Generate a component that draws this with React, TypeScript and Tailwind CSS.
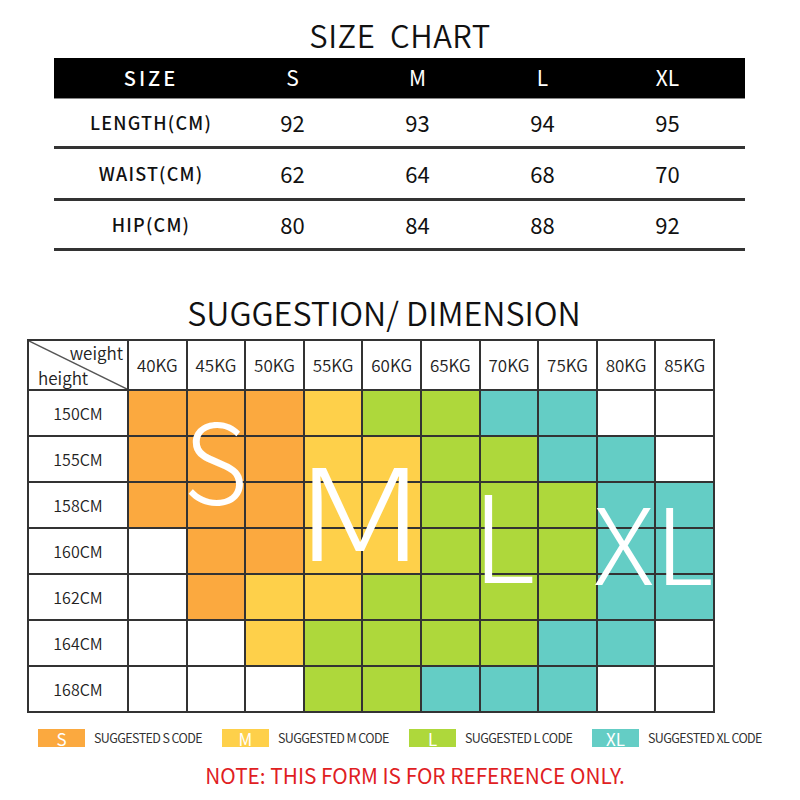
import React from "react";

const O = "bg-[#fba93f]";
const Y = "bg-[#fed04a]";
const G = "bg-[#aed83b]";
const T = "bg-[#64cdc5]";
const W = "bg-white";

const weights = ["40KG", "45KG", "50KG", "55KG", "60KG", "65KG", "70KG", "75KG", "80KG", "85KG"];
const rows: { h: string; c: string[] }[] = [
  { h: "150CM", c: [O, O, O, Y, G, G, T, T, W, W] },
  { h: "155CM", c: [O, O, O, Y, Y, G, G, T, T, W] },
  { h: "158CM", c: [O, O, O, Y, Y, G, G, G, T, T] },
  { h: "160CM", c: [W, O, O, Y, Y, G, G, G, T, T] },
  { h: "162CM", c: [W, O, Y, Y, G, G, G, G, T, T] },
  { h: "164CM", c: [W, W, Y, G, G, G, G, T, T, W] },
  { h: "168CM", c: [W, W, W, G, G, T, T, T, W, W] },
];

const sizeRows = [
  { label: "LENGTH(CM)", v: ["92", "93", "94", "95"], h: "h-[50px]" },
  { label: "WAIST(CM)", v: ["62", "64", "68", "70"], h: "h-[52px]" },
  { label: "HIP(CM)", v: ["80", "84", "88", "92"], h: "h-[50px]" },
];

const FONT = "font-['Noto_Sans_CJK_SC','Noto_Sans',sans-serif]";

export default function App() {
  return (
    <div className={`w-[800px] h-[800px] bg-white text-[#222] ${FONT} relative overflow-hidden`}>
      {/* SIZE CHART title */}
      <div className="h-[58px] flex items-center justify-center pt-[10px]">
        <div className="text-[31px] leading-none tracking-[0.5px] whitespace-pre text-[#111] font-[350]">SIZE  CHART</div>
      </div>

      {/* size table */}
      <div className="ml-[54px] w-[691px]">
        <div className="h-[41px] bg-black border-b border-[#888] grid grid-cols-[176px_125px_125px_125px_125px] items-center text-white">
          <div className="pl-[18px] text-center text-[20px] font-medium tracking-[3px]">SIZE</div>
          <div className="text-center text-[21px]">S</div>
          <div className="text-center text-[21px]">M</div>
          <div className="text-center text-[21px]">L</div>
          <div className="text-center text-[21px]">XL</div>
        </div>
        {sizeRows.map((r) => (
          <div
            key={r.label}
            className={`${r.h} border-b-[3px] border-[#333] grid grid-cols-[176px_125px_125px_125px_125px] items-center`}
          >
            <div className="pl-[18px] text-center text-[18px] font-medium tracking-[1.2px] text-[#111]">{r.label}</div>
            {r.v.map((v, i) => (
              <div key={i} className="text-center text-[22px] text-[#111]">
                {v}
              </div>
            ))}
          </div>
        ))}
      </div>

      {/* SUGGESTION / DIMENSION title */}
      <div className="h-[88px] flex items-center justify-center pt-[34px] pr-[32px]">
        <div className="text-[32.3px] leading-none text-[#111] font-[350] whitespace-pre">SUGGESTION/ DIMENSION</div>
      </div>

      {/* grid */}
      <div className="relative ml-[27px] w-[688px]">
        <div className="border-l-2 border-t-2 border-[#333] grid grid-cols-[100px_repeat(10,1fr)] font-[350]">
          <div className="h-[50px] border-r-2 border-b-2 border-[#333] relative">
            <svg className="absolute inset-0" width="100%" height="100%" viewBox="0 0 98 48" preserveAspectRatio="none">
              <line x1="0" y1="0" x2="98" y2="48" stroke="#555" strokeWidth="1.5" />
            </svg>
            <span className="absolute right-[4px] top-[3px] text-[17px] leading-none">weight</span>
            <span className="absolute left-[9px] bottom-[3px] text-[17px] leading-none">height</span>
          </div>
          {weights.map((w) => (
            <div key={w} className="h-[50px] border-r-2 border-b-2 border-[#333] flex items-center justify-center text-[17px]">
              {w}
            </div>
          ))}
          {rows.map((r) => (
            <React.Fragment key={r.h}>
              <div className="h-[46px] border-r-2 border-b-2 border-[#333] flex items-center justify-center text-[16px]">
                {r.h}
              </div>
              {r.c.map((c, i) => (
                <div key={i} className={`h-[46px] border-r-2 border-b-2 border-[#333] ${c}`} />
              ))}
            </React.Fragment>
          ))}
        </div>

        {/* big letters overlay */}
        <div className="absolute left-[156px] top-[61px] text-[112px] leading-none font-light text-white">S</div>
        <div className="absolute left-[268px] top-[104px] text-[127px] leading-none font-light text-white origin-left scale-x-[1.3]">M</div>
        <div className="absolute left-[445px] top-[131px] text-[121px] leading-none font-light text-white">L</div>
        <div className="absolute left-[566px] top-[148px] text-[105px] leading-none font-light text-white origin-left scale-x-[1.08]">XL</div>
      </div>

      {/* legend */}
      <div className="mt-[16px] pl-[38px] grid grid-cols-[184px_187px_183px_auto] items-center">
        {[
          { c: O, k: "S", t: "SUGGESTED S CODE" },
          { c: Y, k: "M", t: "SUGGESTED M CODE" },
          { c: G, k: "L", t: "SUGGESTED L CODE" },
          { c: T, k: "XL", t: "SUGGESTED XL CODE" },
        ].map((l) => (
          <div key={l.k} className="flex items-center gap-[9px]">
            <div className={`w-[47px] h-[18px] ${l.c} text-white text-[17px] leading-none flex items-center justify-center`}>
              {l.k}
            </div>
            <div className="text-[12.5px] tracking-[-0.6px] text-[#333]">{l.t}</div>
          </div>
        ))}
      </div>

      {/* note */}
      <div className="mt-[17px] flex justify-center pl-[30px]">
        <div className="text-[20.8px] leading-none text-[#e0201f]">NOTE: THIS FORM IS FOR REFERENCE ONLY.</div>
      </div>
    </div>
  );
}
